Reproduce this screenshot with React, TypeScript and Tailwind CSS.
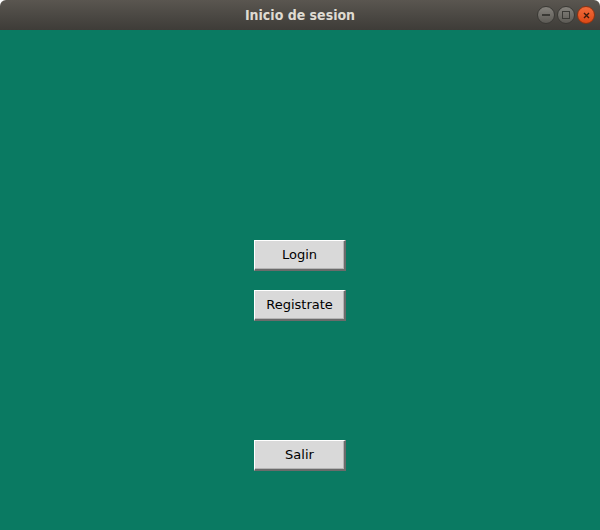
export default function App() {
  const btn =
    "w-[92px] h-[31px] bg-[#d9d9d9] text-[#000] text-[13px] border-t border-l border-white border-b-2 border-r-2 border-b-[#6b6b6b] border-r-[#6b6b6b] shadow-[inset_-1px_-1px_0_#b4b4b4] flex items-center justify-center";

  return (
    <div className="w-[600px] h-[530px] flex flex-col font-['DejaVu_Sans',sans-serif] overflow-hidden">
      <div className="h-[30px] shrink-0 relative flex items-center justify-center bg-gradient-to-b from-[#5a5650] to-[#3e3c38] rounded-t-[6px]">
        <span className="text-[14px] font-bold text-[#dfdbd2] font-['DejaVu_Sans_Condensed','DejaVu_Sans',sans-serif]">
          Inicio de sesion
        </span>
        <div className="absolute right-[5px] top-[6px] flex gap-[2px]">
          <div className="w-[18px] h-[18px] rounded-full bg-gradient-to-b from-[#85827c] to-[#5c5a55] border border-[#3a3935] flex items-center justify-center">
            <div className="w-[8px] h-[1.5px] bg-[#3a3935]" />
          </div>
          <div className="w-[18px] h-[18px] rounded-full bg-gradient-to-b from-[#85827c] to-[#5c5a55] border border-[#3a3935] flex items-center justify-center">
            <div className="w-[8px] h-[8px] border border-[#3a3935]" />
          </div>
          <div className="w-[18px] h-[18px] rounded-full bg-gradient-to-b from-[#f26b3a] to-[#dd4814] border border-[#8f3210] flex items-center justify-center">
            <svg width="7" height="7" viewBox="0 0 7 7">
              <path d="M1 1L6 6M6 1L1 6" stroke="#3a1a0c" strokeWidth="1.4" />
            </svg>
          </div>
        </div>
      </div>
      <div className="flex-1 bg-[#0a7a62] flex flex-col items-center pt-[210px]">
        <button className={btn}>Login</button>
        <button className={`${btn} mt-[19px]`}>Registrate</button>
        <button className={`${btn} mt-[119px]`}>Salir</button>
      </div>
    </div>
  );
}
